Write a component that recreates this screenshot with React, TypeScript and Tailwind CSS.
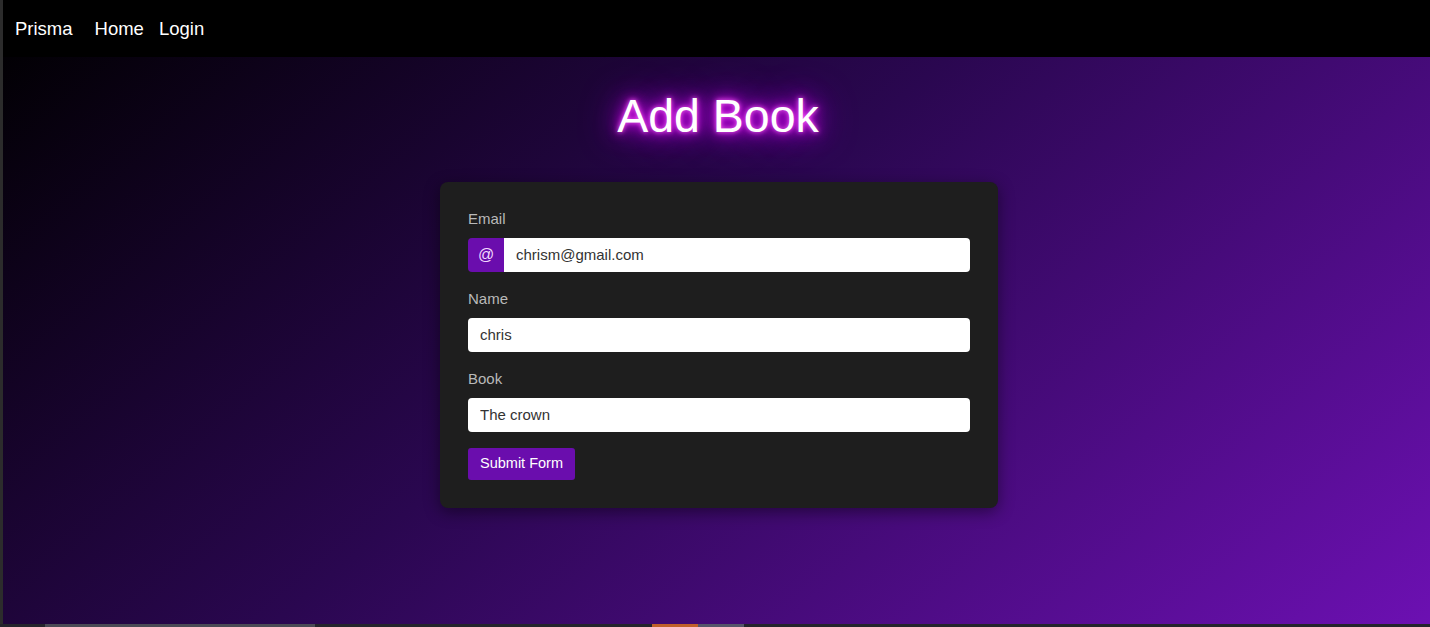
import React, { useState } from 'react';

const Field: React.FC<{
    label: string;
    value: string;
    onChange: (v: string) => void;
    addon?: string;
}> = ({ label, value, onChange, addon }) => (
    <div className="mb-4">
        <label className="block text-[15px] leading-[22px] text-[#b9b9b9] mb-2">{label}</label>
        <div className="flex h-[34px]">
            {addon && (
                <span className="w-9 flex items-center justify-center bg-[#6a0dad] text-[#f3d9ff] text-[16px] rounded-l-[4px]">
                    {addon}
                </span>
            )}
            <input
                type="text"
                value={value}
                onChange={(e) => onChange(e.target.value)}
                className={`flex-1 min-w-0 bg-white text-[#333] text-[15px] px-3 focus:outline-none ${addon ? 'rounded-r-[4px]' : 'rounded-[4px]'}`}
            />
        </div>
    </div>
);

const App: React.FC = () => {
    const [email, setEmail] = useState('chrism@gmail.com');
    const [name, setName] = useState('chris');
    const [book, setBook] = useState('The crown');

    return (
        <div className="h-[627px] flex flex-col bg-[#2a2a30] font-['Liberation_Sans',Arial,sans-serif] overflow-hidden">
            <div className="flex flex-1 min-h-0">
                {/* window edge */}
                <div className="w-[3px] bg-[#2c2c2c] shrink-0" />
                <div className="flex-1 flex flex-col min-w-0">
                    <nav className="h-[57px] bg-black flex items-center px-3 text-white text-[18.5px] shrink-0">
                        <span className="mr-[22px]">Prisma</span>
                        <span className="mr-[15px]">Home</span>
                        <span>Login</span>
                    </nav>

                    <main className="flex-1 bg-[linear-gradient(140deg,#020004_0%,#2a0750_45%,#6c10b2_100%)] flex flex-col items-center">
                        <h1 className="mt-[31px] mb-[38px] ml-[3px] text-[46.5px] leading-[56px] text-white [text-shadow:0_0_5px_#ff66ff,0_0_12px_#ee00ff,0_0_24px_#cc00ff,0_0_40px_#b000ff]">
                            Add Book
                        </h1>

                        <form
                            onSubmit={(e) => e.preventDefault()}
                            className="w-[558px] ml-[5px] bg-[#1e1e1e] rounded-lg pt-[26px] pb-[28px] px-[28px] shadow-[0_4px_16px_rgba(0,0,0,0.45)]"
                        >
                            <Field label="Email" addon="@" value={email} onChange={setEmail} />
                            <Field label="Name" value={name} onChange={setName} />
                            <Field label="Book" value={book} onChange={setBook} />
                            <button
                                type="submit"
                                className="h-8 w-[107px] bg-[#6a0dad] text-white text-[14.5px] rounded-[3px]"
                            >
                                Submit Form
                            </button>
                        </form>
                    </main>
                </div>
            </div>

            {/* taskbar strip */}
            <div className="h-[3px] flex shrink-0 bg-[#24242c]">
                <div className="w-[45px]" />
                <div className="w-[270px] bg-[#4a4a55]" />
                <div className="w-[337px]" />
                <div className="w-[46px] bg-[#c0602a]" />
                <div className="w-[46px] bg-[#55556a]" />
            </div>
        </div>
    );
};

export default App;
